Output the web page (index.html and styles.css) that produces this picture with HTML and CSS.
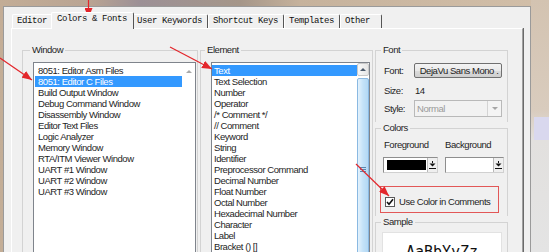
FILE: index.html
```html
<!DOCTYPE html>
<html lang="en">
<head>
    <meta charset="UTF-8">
    <meta name="viewport" content="width=device-width, initial-scale=1.0">
    <title>Configuration - Colors &amp; Fonts</title>
    <link rel="stylesheet" href="styles.css">
</head>
<body>
    <div class="dialog">
        <div class="tabs">
            <div class="tab">Editor</div>
            <div class="tab active">Colors &amp; Fonts</div>
            <div class="tab">User Keywords</div>
            <div class="tab">Shortcut Keys</div>
            <div class="tab">Templates</div>
            <div class="tab tab-last">Other</div>
        </div>

        <div class="page">
            <fieldset class="group group-window">
                <legend>Window</legend>
                <div class="group-body">
                    <div class="listbox list-window">
                        <ul class="items">
                            <li>8051: Editor Asm Files</li>
                            <li class="sel">8051: Editor C Files</li>
                            <li>Build Output Window</li>
                            <li>Debug Command Window</li>
                            <li>Disassembly Window</li>
                            <li>Editor Text Files</li>
                            <li>Logic Analyzer</li>
                            <li>Memory Window</li>
                            <li>RTA/ITM Viewer Window</li>
                            <li>UART #1 Window</li>
                            <li>UART #2 Window</li>
                            <li>UART #3 Window</li>
                        </ul>
                        <div class="vscroll disabled">
                            <span class="arrow-up"></span>
                        </div>
                    </div>
                </div>
            </fieldset>

            <fieldset class="group group-element">
                <legend>Element</legend>
                <div class="group-body">
                    <div class="listbox list-element">
                        <ul class="items">
                            <li class="sel">Text</li>
                            <li>Text Selection</li>
                            <li>Number</li>
                            <li>Operator</li>
                            <li>/* Comment */</li>
                            <li>// Comment</li>
                            <li>Keyword</li>
                            <li>String</li>
                            <li>Identifier</li>
                            <li>Preprocessor Command</li>
                            <li>Decimal Number</li>
                            <li>Float Number</li>
                            <li>Octal Number</li>
                            <li>Hexadecimal Number</li>
                            <li>Character</li>
                            <li>Label</li>
                            <li>Bracket () []</li>
                        </ul>
                        <div class="vscroll">
                            <div class="sb-btn"><span class="arrow-up dark"></span></div>
                            <div class="sb-thumb">
                                <span class="grip"></span>
                            </div>
                        </div>
                    </div>
                </div>
            </fieldset>

            <div class="side">
                <fieldset class="group group-font">
                    <legend>Font</legend>
                    <div class="group-body">
                        <div class="row row-font">
                            <span class="lbl">Font:</span>
                            <button class="btn">DejaVu Sans Mono .</button>
                        </div>
                        <div class="row row-size">
                            <span class="lbl">Size:</span>
                            <span class="val">14</span>
                        </div>
                        <div class="row row-style">
                            <span class="lbl">Style:</span>
                            <div class="combo">
                                <span class="combo-text">Normal</span>
                                <span class="combo-btn"><span class="arrow-down"></span></span>
                            </div>
                        </div>
                    </div>
                </fieldset>

                <fieldset class="group group-colors">
                    <legend>Colors</legend>
                    <div class="group-body">
                        <div class="color-labels">
                            <span class="fg-label">Foreground</span>
                            <span>Background</span>
                        </div>
                        <div class="pickers">
                            <div class="picker picker-fg">
                                <span class="swatch black"></span>
                                <span class="pick-btn">
                                    <svg width="7" height="8" viewBox="0 0 7 8"><rect x="3" y="0" width="1" height="2" fill="#111"/><path d="M0.5 2.5 H6.5 L3.5 5.5 Z" fill="#111"/><rect x="0" y="7" width="7" height="1" fill="#111"/></svg>
                                </span>
                            </div>
                            <div class="picker picker-bg">
                                <span class="swatch white"></span>
                                <span class="pick-btn">
                                    <svg width="7" height="8" viewBox="0 0 7 8"><rect x="3" y="0" width="1" height="2" fill="#111"/><path d="M0.5 2.5 H6.5 L3.5 5.5 Z" fill="#111"/><rect x="0" y="7" width="7" height="1" fill="#111"/></svg>
                                </span>
                            </div>
                        </div>
                        <div class="mark-box">
                            <span class="checkbox">
                                <svg width="8" height="8" viewBox="0 0 8 8"><path d="M1 4 L3 6.2 L7 1.2" fill="none" stroke="#111" stroke-width="1.6"/></svg>
                            </span>
                            <span>Use Color in Comments</span>
                        </div>
                    </div>
                </fieldset>

                <fieldset class="group group-sample">
                    <legend>Sample</legend>
                    <div class="group-body">
                        <div class="sample">AaBbYyZz</div>
                    </div>
                </fieldset>
            </div>
        </div>
    </div>

    <!-- red annotation arrows -->
    <svg class="annot" width="549" height="252" viewBox="0 0 549 252">
        <defs>
            <marker id="head" markerUnits="userSpaceOnUse" markerWidth="10" markerHeight="8" refX="10" refY="4" orient="auto">
                <path d="M0 0 L10 4 L0 8 Z" fill="#e3262b"/>
            </marker>
        </defs>
        <g stroke="#e3262b" stroke-width="1.2" fill="none">
            <line x1="88.5" y1="0" x2="88.5" y2="18" marker-end="url(#head)"/>
            <line x1="0" y1="58" x2="32" y2="80" marker-end="url(#head)"/>
            <line x1="170" y1="47" x2="212" y2="69" marker-end="url(#head)"/>
            <line x1="356" y1="164" x2="389" y2="196" marker-end="url(#head)"/>
        </g>
    </svg>
</body>
</html>
```

FILE: styles.css
```css
html {
    margin: 0;
    overflow: hidden;
}
body {
    position: relative;
    box-sizing: border-box;
    width: 549px;
    height: 252px;
    margin: 0;
    padding: 6px 0 0 3px;
    overflow: hidden;
    font-family: "Liberation Sans", Arial, sans-serif;
    font-size: 9.5px;
    letter-spacing: -0.45px;
    color: #1e1e1e;
    background:
        linear-gradient(#d9d8ee, #d9d8ee) no-repeat 534px 117px / 15px 23px,
        linear-gradient(to bottom, #d3c3b1 0, #d9ccbe 110px, #e2e0de 140px, #e4e4e4 100%) no-repeat 531px 0 / 18px 252px,
        linear-gradient(to right, #c3ad96 0, #b9a493 90px, #9c9096 140px, #a59689 240px, #c6b29c 300px, #d2bfa9 100%);
}
.dialog {
    box-sizing: border-box;
    width: 528px;
    height: 260px;
    padding: 5px 7px 0 7px;
    background-color: #f0f0f0;
    border: 1px solid #9a9a9a;
    border-bottom: 0;
}

/* tab strip */
.tabs {
    display: flex;
    align-items: flex-end;
    height: 16px;
    margin-left: 1px;
    font-family: "Liberation Mono", "Courier New", monospace;
    font-size: 9px;
    letter-spacing: -0.4px;
    color: #111;
}
.tab {
    height: 13px;
    line-height: 13px;
    padding: 0 5px 0 4px;
    border-top: 1px solid #fff;
    border-left: 1px solid #fff;
    border-right: 1px solid #555;
    border-radius: 2px 2px 0 0;
    white-space: nowrap;
}
.tab.active {
    position: relative;
    z-index: 1;
    height: 16px;
    line-height: 12px;
    margin: 0 -2px -1px -2px;
    padding: 0 6px 0 5px;
    background-color: #f0f0f0;
}
.tab-last {
    padding-right: 11px;
}

/* tab page */
.page {
    display: flex;
    align-items: flex-start;
    gap: 2px;
    box-sizing: border-box;
    width: 512px;
    height: 240px;
    padding: 15px 0 0 10px;
    border-top: 1px solid #fff;
    border-left: 1px solid #fff;
    border-right: 1px solid #a0a0a0;
    box-shadow: 1px 0 0 #6a6a6a;
}

/* group boxes */
.group {
    box-sizing: border-box;
    margin: 0;
    padding: 0;
    min-width: 0;
    border: 1px solid #d3d3d3;
}
.group legend {
    margin-left: 5px;
    padding: 0 2px;
    line-height: 12px;
}
.group-window {
    width: 176px;
    height: 220px;
}
.group-window legend {
    margin-left: 7px;
}
.group-element {
    width: 173px;
    height: 220px;
}
.group-element legend {
    margin-left: 4px;
}
.group-window .group-body,
.group-element .group-body {
    padding: 6px 0 0 10px;
}

/* list boxes */
.listbox {
    display: flex;
    height: 200px;
    background-color: #fff;
    border: 1px solid #7f848c;
}
.list-window {
    width: 161px;
}
.list-element {
    width: 157px;
}
.items {
    flex: 1;
    list-style: none;
    margin: 0;
    padding: 2px 0 0 1px;
}
.items li {
    height: 11px;
    line-height: 11px;
    padding-left: 3px;
    white-space: nowrap;
}
.list-element .items {
    padding-left: 0;
}
.list-element .items li {
    padding-left: 2px;
}
.items li.sel {
    background-color: #3399ff;
    color: #fff;
}
.vscroll {
    display: flex;
    flex-direction: column;
    align-items: center;
    width: 12px;
    background-color: #fff;
}
.vscroll.disabled {
    width: 13px;
    padding-top: 7px;
    box-sizing: border-box;
}
.arrow-up {
    width: 0;
    height: 0;
    border-left: 3px solid transparent;
    border-right: 3px solid transparent;
    border-bottom: 3px solid #a9a9a9;
}
.arrow-up.dark {
    border-bottom-color: #4c5a6c;
}
.sb-btn {
    display: flex;
    align-items: center;
    justify-content: center;
    box-sizing: border-box;
    width: 12px;
    height: 14px;
    border: 1px solid #c9c9c9;
    border-radius: 2px;
    background: linear-gradient(to right, #f8f8f8, #e6e6e6);
}
.sb-thumb {
    display: flex;
    align-items: center;
    justify-content: center;
    box-sizing: border-box;
    width: 12px;
    height: 208px;
    margin-top: 2px;
    border: 1px solid #8ab9e2;
    border-radius: 2px;
    background: linear-gradient(to right, #e4f2fc, #c4e2f8 50%, #b3d8f4);
}
.grip {
    width: 6px;
    height: 6px;
    background: repeating-linear-gradient(to bottom, #5b86ad 0, #5b86ad 1px, transparent 1px, transparent 2px);
}

/* right column */
.side {
    display: flex;
    flex-direction: column;
    width: 133px;
}
.group-font {
    border-bottom: 0;
}
.group-font .group-body {
    padding: 7px 5px 5px 8px;
}
.row {
    display: flex;
    align-items: center;
}
.lbl {
    width: 30px;
    flex-shrink: 0;
}
.row-font {
    height: 15px;
}
.row-size {
    height: 12px;
    margin-top: 6px;
}
.row-size .val {
    padding-left: 1px;
}
.row-style {
    height: 17px;
    margin-top: 4px;
}
.btn {
    box-sizing: border-box;
    width: 89px;
    height: 15px;
    padding: 0 0 0 2px;
    font: inherit;
    letter-spacing: inherit;
    color: #1e1e1e;
    text-align: center;
    border: 1px solid #707070;
    border-radius: 2px;
    background: linear-gradient(#f4f4f4, #e9e9e9 50%, #dcdcdc 51%, #cfcfcf);
}
.combo {
    display: flex;
    align-items: center;
    box-sizing: border-box;
    width: 89px;
    height: 17px;
    border: 1px solid #b9b9b9;
    background-color: #f2f2f2;
}
.combo-text {
    flex: 1;
    padding-left: 2px;
    color: #9a9a9a;
}
.combo-btn {
    display: flex;
    align-items: center;
    justify-content: center;
    box-sizing: border-box;
    width: 14px;
    height: 15px;
    margin-right: 0;
    border-left: 1px solid #d4d4d4;
    background-color: #f4f4f4;
}
.arrow-down {
    width: 0;
    height: 0;
    border-left: 3px solid transparent;
    border-right: 3px solid transparent;
    border-top: 3px solid #a6a6a6;
}

/* colors */
.group-colors {
    border-bottom: 0;
}
.group-colors .group-body {
    padding: 5px 0 3px 8px;
}
.color-labels {
    display: flex;
    height: 12px;
    line-height: 12px;
}
.fg-label {
    width: 61px;
}
.pickers {
    display: flex;
    gap: 7px;
    height: 16px;
    margin: 6px 0 0 -1px;
}
.picker {
    display: flex;
    box-sizing: border-box;
    height: 16px;
    border: 1px solid #8e8e8e;
    border-right-color: #d0d0d0;
    border-bottom-color: #d0d0d0;
    background-color: #fff;
}
.picker-fg {
    width: 55px;
}
.picker-bg {
    width: 59px;
}
.swatch {
    flex: 1;
    margin: 2px 1px 2px 3px;
}
.swatch.black {
    background-color: #000;
}
.swatch.white {
    background-color: #fff;
    margin-left: 1px;
}
.pick-btn {
    display: flex;
    align-items: center;
    justify-content: center;
    width: 9px;
    border-left: 1px solid #b8b8b8;
    background-color: #efefef;
}
.mark-box {
    display: flex;
    align-items: center;
    gap: 4px;
    box-sizing: border-box;
    width: 119px;
    height: 27px;
    margin: 13px 0 0 -4px;
    padding: 4px 0 0 4px;
    border: 1px solid #e25757;
}
.checkbox {
    display: flex;
    align-items: center;
    justify-content: center;
    box-sizing: border-box;
    width: 10px;
    height: 10px;
    border: 1px solid #5a5a5a;
    background-color: #fff;
}

/* sample */
.group-sample {
    border-bottom: 0;
}
.group-sample .group-body {
    padding: 4px 0 0 6px;
}
.sample {
    box-sizing: border-box;
    width: 120px;
    height: 40px;
    padding-top: 10px;
    font-family: "DejaVu Sans Mono", monospace;
    font-size: 15px;
    letter-spacing: 0;
    line-height: 18px;
    text-align: center;
    color: #111;
    background-color: #fff;
    border: 1px solid #e2e2e2;
}

/* annotation layer */
.annot {
    position: absolute;
    top: 0;
    left: 0;
    pointer-events: none;
}
```
